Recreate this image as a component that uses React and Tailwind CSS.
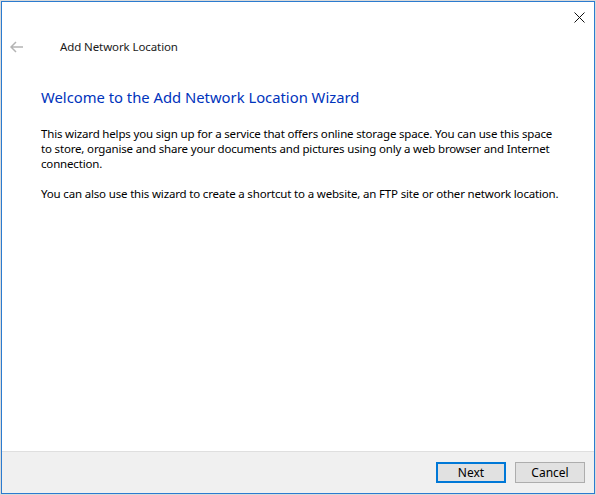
export default function App() {
  return (
    <div className="w-[596px] h-[495px] bg-[#dadada] pt-[1px] pl-[1px] font-['Noto_Sans',sans-serif]">
      <div className="w-[594px] h-[493px] border border-[#2b7bcf] bg-white flex flex-col">
        <div className="h-[30px] flex justify-end items-start">
          <button className="w-[28px] h-[30px] mr-[1px] flex items-center justify-center">
            <svg width="11" height="11" viewBox="0 0 11 11">
              <path d="M0.5 0.5 L10.5 10.5 M10.5 0.5 L0.5 10.5" stroke="#111" strokeWidth="1" />
            </svg>
          </button>
        </div>
        <div className="h-[30px] flex items-center">
          <svg className="ml-[8px]" width="14" height="12" viewBox="0 0 14 12">
            <path d="M1 6 H13 M6 1 L1 6 L6 11" stroke="#b4b4b4" strokeWidth="1.5" fill="none" />
          </svg>
          <span className="ml-[36px] text-[11.5px] tracking-[-0.1px] text-[#1a1a1a]">Add Network Location</span>
        </div>
        <div className="pl-[39px] pr-[30px]">
          <h1 className="mt-[25px] text-[14.8px] leading-[20px] text-[#0033bc]">
            Welcome to the Add Network Location Wizard
          </h1>
          <p className="mt-[19px] text-[11.5px] tracking-[-0.17px] leading-[15px] text-black">
            This wizard helps you sign up for a service that offers online storage space. You can use this space
            to store, organise and share your documents and pictures using only a web browser and Internet
            connection.
          </p>
          <p className="mt-[15px] text-[11.5px] tracking-[-0.17px] leading-[15px] text-black">
            You can also use this wizard to create a shortcut to a website, an FTP site or other network location.
          </p>
        </div>
        <div className="flex-1" />
        <div className="h-[42px] border-t border-[#dfdfdf] bg-[#f0f0f0] flex items-center justify-end gap-[9px] pr-[9px]">
          <button className="w-[70px] h-[21px] border-2 border-[#0078d7] bg-[#e1e1e1] text-[12px] text-black">
            Next
          </button>
          <button className="w-[70px] h-[21px] border border-[#adadad] bg-[#e1e1e1] text-[12px] text-black">
            Cancel
          </button>
        </div>
      </div>
    </div>
  );
}
